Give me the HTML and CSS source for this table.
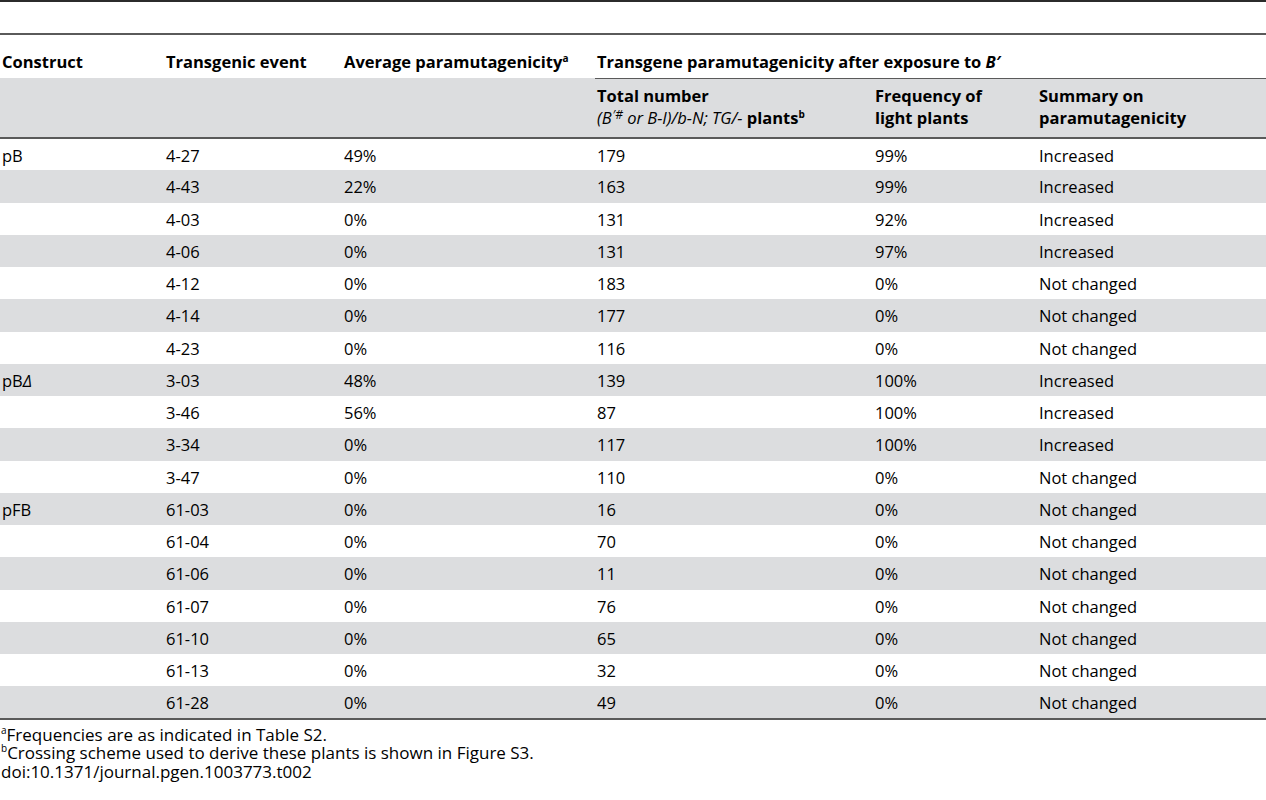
FILE: index.html
```html
<!DOCTYPE html>
<html lang="en">
  <head>
    <meta charset="UTF-8" />
    <title>Table 2 | Transgene paramutagenicity</title>
    <link rel="stylesheet" href="styles.css">
  </head>
  <body>
    <div class="table-box">
      <div class="caption-space"></div>
      <table class="data-table">
        <colgroup>
          <col class="c1"><col class="c2"><col class="c3"><col class="c4"><col class="c5"><col class="c6">
        </colgroup>
        <thead>
          <tr class="head-top">
            <th>Construct</th>
            <th>Transgenic event</th>
            <th>Average paramutagenicity<sup>a</sup></th>
            <th colspan="3" class="group">Transgene paramutagenicity after exposure to <i>B′</i></th>
          </tr>
          <tr class="head-sub">
            <th></th>
            <th></th>
            <th></th>
            <th>Total number<br><i>(B<sup>′#</sup> or B-I)/b-N; TG/-</i> plants<sup>b</sup></th>
            <th>Frequency of<br>light plants</th>
            <th>Summary on<br>paramutagenicity</th>
          </tr>
        </thead>
        <tbody>
          <tr><td>pB</td><td>4-27</td><td>49%</td><td>179</td><td>99%</td><td>Increased</td></tr>
          <tr><td></td><td>4-43</td><td>22%</td><td>163</td><td>99%</td><td>Increased</td></tr>
          <tr><td></td><td>4-03</td><td>0%</td><td>131</td><td>92%</td><td>Increased</td></tr>
          <tr><td></td><td>4-06</td><td>0%</td><td>131</td><td>97%</td><td>Increased</td></tr>
          <tr><td></td><td>4-12</td><td>0%</td><td>183</td><td>0%</td><td>Not changed</td></tr>
          <tr><td></td><td>4-14</td><td>0%</td><td>177</td><td>0%</td><td>Not changed</td></tr>
          <tr><td></td><td>4-23</td><td>0%</td><td>116</td><td>0%</td><td>Not changed</td></tr>
          <tr><td>pB<i>Δ</i></td><td>3-03</td><td>48%</td><td>139</td><td>100%</td><td>Increased</td></tr>
          <tr><td></td><td>3-46</td><td>56%</td><td>87</td><td>100%</td><td>Increased</td></tr>
          <tr><td></td><td>3-34</td><td>0%</td><td>117</td><td>100%</td><td>Increased</td></tr>
          <tr><td></td><td>3-47</td><td>0%</td><td>110</td><td>0%</td><td>Not changed</td></tr>
          <tr><td>pFB</td><td>61-03</td><td>0%</td><td>16</td><td>0%</td><td>Not changed</td></tr>
          <tr><td></td><td>61-04</td><td>0%</td><td>70</td><td>0%</td><td>Not changed</td></tr>
          <tr><td></td><td>61-06</td><td>0%</td><td>11</td><td>0%</td><td>Not changed</td></tr>
          <tr><td></td><td>61-07</td><td>0%</td><td>76</td><td>0%</td><td>Not changed</td></tr>
          <tr><td></td><td>61-10</td><td>0%</td><td>65</td><td>0%</td><td>Not changed</td></tr>
          <tr><td></td><td>61-13</td><td>0%</td><td>32</td><td>0%</td><td>Not changed</td></tr>
          <tr><td></td><td>61-28</td><td>0%</td><td>49</td><td>0%</td><td>Not changed</td></tr>
        </tbody>
      </table>
    </div>

    <!-- Footnotes -->
    <div class="notes">
      <p><sup>a</sup>Frequencies are as indicated in Table S2.</p>
      <p><sup>b</sup>Crossing scheme used to derive these plants is shown in Figure S3.</p>
      <p>doi:10.1371/journal.pgen.1003773.t002</p>
    </div>
  </body>
</html>
```

FILE: styles.css
```css
/* Global Styles */
body {
  margin: 0;
  padding: 0;
  font-family: "Open Sans", "DejaVu Sans", sans-serif;
  background-color: #ffffff;
  color: #000000;
  width: 1266px;
}

/* Table wrapper */
.table-box {
  border-top: 2px solid #2b2b2b;
}

.caption-space {
  height: 31px;
  border-bottom: 2px solid #5a5a5a;
}

.data-table {
  width: 100%;
  border-collapse: collapse;
  table-layout: fixed;
  font-size: 16.5px;
}

.c1 { width: 164px; }
.c2 { width: 178px; }
.c3 { width: 253px; }
.c4 { width: 278px; }
.c5 { width: 164px; }
.c6 { width: 229px; }

.data-table th,
.data-table td {
  padding: 0 2px;
  text-align: left;
  box-sizing: border-box;
}

.data-table th {
  font-weight: 700;
  line-height: 22px;
}

.data-table sup {
  font-size: 10px;
  line-height: 0;
}

/* Header rows */
.head-top th {
  height: 43px;
  vertical-align: bottom;
  padding-bottom: 5px;
}

.head-top th.group {
  border-bottom: 1px solid #5a5a5a;
}

.head-top sup {
  vertical-align: 6px;
}

.head-sub th {
  background-color: #dcdddf;
  height: 60px;
  vertical-align: top;
  padding-top: 6px;
  border-bottom: 2px solid #5a5a5a;
}

.head-sub i {
  font-weight: 400;
}

.head-sub i sup {
  font-size: 12px;
  vertical-align: 5px;
  padding-left: 1px;
}

/* Body rows */
.data-table td {
  height: 32.25px;
  vertical-align: middle;
  padding-top: 1px;
}

.data-table tbody tr:nth-child(even) td {
  background-color: #dcdddf;
}

.data-table tbody tr:last-child td {
  border-bottom: 2px solid #5a5a5a;
}

/* Footnotes */
.notes {
  margin-top: 6px;
  font-size: 17px;
  line-height: 18.75px;
}

.notes p {
  margin: 0;
  padding-left: 1px;
}

.notes sup {
  font-size: 10px;
  line-height: 0;
}
```
